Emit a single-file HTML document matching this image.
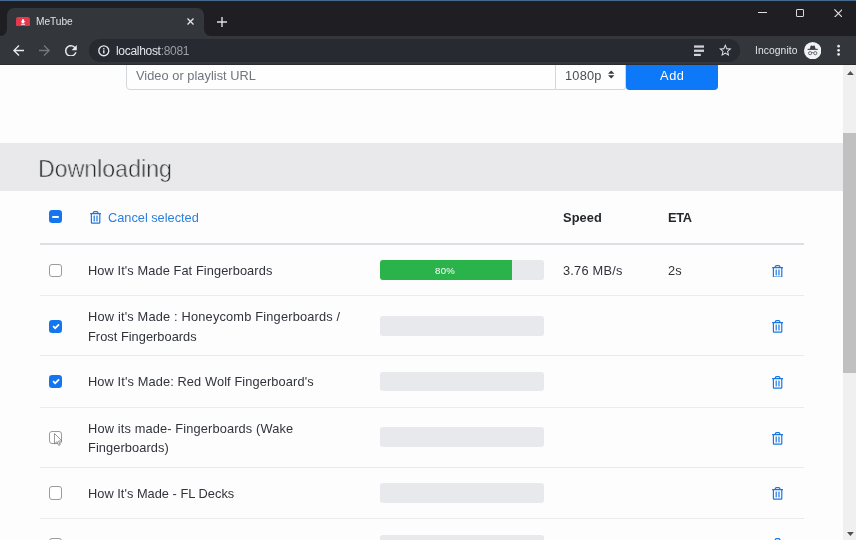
<!DOCTYPE html>
<html lang="en">
<head>
<meta charset="utf-8">
<title>MeTube</title>
<style>
html,body{margin:0;padding:0;}
body{width:856px;height:540px;overflow:hidden;background:#fdfdfe;font-family:"Liberation Sans",Arial,sans-serif;}
#root{position:relative;width:856px;height:540px;overflow:hidden;background:#fdfdfe;}
.a{position:absolute;}
.t{position:absolute;will-change:transform;white-space:nowrap;line-height:16px;font-size:12.8px;color:#30343a;}
/* chrome */
#frame{left:0;top:0;width:856px;height:36px;background:#1f1f23;}
#topline{left:0;top:0;width:856px;height:2px;background:linear-gradient(#47698b 0,#47698b 50%,#10263d 50%,#10263d 100%);}
#tab{left:7px;top:8px;width:197px;height:28px;background:#33363a;border-radius:7px 7px 0 0;}
#toolbar{left:0;top:36px;width:856px;height:29px;background:#33363a;border-bottom:0;box-shadow:inset 0 -1px 0 #2a2c30;}
#omni{left:89px;top:38.7px;width:650.5px;height:23.3px;border-radius:12px;background:#272a30;}
/* page */
#band{left:0;top:142.7px;width:843.4px;height:48.3px;background:#e9e9eb;}
#sbtrack{left:843.4px;top:64.5px;width:12.6px;height:476px;background:#f0f0f1;}
#sbthumb{left:843.4px;top:133px;width:12.6px;height:240px;background:#c0c0c1;}
.line{position:absolute;left:39.5px;width:764.3px;height:1px;background:#e9ebee;}
.cb{position:absolute;left:49px;width:11.4px;height:11.4px;border:1px solid #9a9a9f;border-radius:3px;background:#fff;}
.cbc{position:absolute;left:49.3px;width:12.8px;height:13px;border-radius:3.2px;background:#1476ef;}
.pb{position:absolute;left:379.7px;width:164.5px;height:19.8px;border-radius:3px;background:#e8e9ec;overflow:hidden;}
.tr{position:absolute;width:11.2px;height:12.8px;}
</style>
</head>
<body>
<div id="root">
<!-- page content -->
<div class="a" id="band"></div>
<div class="a" id="sbtrack"></div>
<div class="a" id="sbthumb"></div>

<!-- add form -->
<div class="a" style="left:126px;top:56px;width:429.5px;height:33.6px;box-sizing:border-box;border:1px solid #d3d7dc;border-radius:0 0 0 4px;background:#fefefe;"></div>
<div class="a" style="left:555.5px;top:56px;width:70px;height:33.6px;box-sizing:border-box;border:1px solid #d3d7dc;border-left:none;border-radius:0 0 3.5px 0;background:#fefefe;"></div>
<div class="a" style="left:625.5px;top:56px;width:92px;height:34px;border-radius:0 0 4px 3.5px;background:#0d78f8;"></div>
<span class="t" id="ph" style="left:136.10px;top:68.20px;color:#70767d;letter-spacing:0.035px;">Video or playlist URL</span>
<span class="t" id="q" style="left:565.40px;top:68.20px;color:#4a4f55;letter-spacing:0.200px;">1080p</span>
<svg class="a" style="left:608.3px;top:70.2px;" width="6.4" height="9" viewBox="0 0 4 5"><path fill="#343a40" d="M2 0L0 2h4zm0 5L0 3h4z"/></svg>
<span class="t" id="add" style="left:659.60px;top:68.20px;color:#fff;letter-spacing:0.600px;">Add</span>

<!-- heading -->
<span class="t" id="h2" style="left:38px;top:152.6px;font-size:24.4px;line-height:32px;color:#25292e;transform:scaleX(0.949);transform-origin:0 0;-webkit-text-stroke:0.6px #e9e9eb;">Downloading</span>

<!-- table header -->
<div class="cbc" style="top:210.3px;"><div class="a" style="left:3px;top:5.6px;width:6.8px;height:2px;background:#fff;border-radius:1px;"></div></div>
<svg class="tr" style="left:89.8px;top:211.3px;" viewBox="0 0 448 512"><path fill="#1b78e2" d="M268 416h24a12 12 0 0 0 12-12V188a12 12 0 0 0-12-12h-24a12 12 0 0 0-12 12v216a12 12 0 0 0 12 12zM432 80h-82.41l-34-56.7A48 48 0 0 0 274.41 0H173.59a48 48 0 0 0-41.16 23.3L98.41 80H16A16 16 0 0 0 0 96v16a16 16 0 0 0 16 16h16v336a48 48 0 0 0 48 48h288a48 48 0 0 0 48-48V128h16a16 16 0 0 0 16-16V96a16 16 0 0 0-16-16zM171.84 50.91A6 6 0 0 1 177 48h94a6 6 0 0 1 5.15 2.91L293.61 80H154.39zM368 464H80V128h288zm-212-48h24a12 12 0 0 0 12-12V188a12 12 0 0 0-12-12h-24a12 12 0 0 0-12 12v216a12 12 0 0 0 12 12z"/></svg>
<span class="t" id="cs" style="left:107.80px;top:209.80px;color:#2b80dc;letter-spacing:-0.021px;">Cancel selected</span>
<span class="t" id="sp" style="left:563.10px;top:210.00px;font-weight:bold;color:#24282c;letter-spacing:0.125px;">Speed</span>
<span class="t" id="eta" style="left:668.40px;top:210.20px;font-weight:bold;color:#24282c;letter-spacing:-0.300px;">ETA</span>
<div class="line" style="top:242.5px;height:2px;background:#dcdfe3;"></div>

<!-- row 1 -->
<div class="cb" style="top:263.5px;"></div>
<span class="t" id="r1" style="left:88.40px;top:262.80px;letter-spacing:0.090px;">How It's Made Fat Fingerboards</span>
<div class="pb" style="top:260px;"><div class="a" style="left:0;top:0;width:132px;height:100%;background:#2bb34b;"></div></div>
<span class="t" id="pc" style="left:435.30px;top:264.10px;font-size:9.6px;line-height:14px;color:#fff;letter-spacing:0.300px;">80%</span>
<span class="t" id="spd" style="left:563.00px;top:262.90px;letter-spacing:0.213px;">3.76 MB/s</span>
<span class="t" id="e2" style="left:667.90px;top:262.90px;letter-spacing:0.100px;">2s</span>
<svg class="tr" style="left:772.3px;top:264.6px;" viewBox="0 0 448 512"><path fill="#1b78e2" d="M268 416h24a12 12 0 0 0 12-12V188a12 12 0 0 0-12-12h-24a12 12 0 0 0-12 12v216a12 12 0 0 0 12 12zM432 80h-82.41l-34-56.7A48 48 0 0 0 274.41 0H173.59a48 48 0 0 0-41.16 23.3L98.41 80H16A16 16 0 0 0 0 96v16a16 16 0 0 0 16 16h16v336a48 48 0 0 0 48 48h288a48 48 0 0 0 48-48V128h16a16 16 0 0 0 16-16V96a16 16 0 0 0-16-16zM171.84 50.91A6 6 0 0 1 177 48h94a6 6 0 0 1 5.15 2.91L293.61 80H154.39zM368 464H80V128h288zm-212-48h24a12 12 0 0 0 12-12V188a12 12 0 0 0-12-12h-24a12 12 0 0 0-12 12v216a12 12 0 0 0 12 12z"/></svg>
<div class="line" style="top:295.3px;"></div>

<!-- row 2 -->
<div class="cbc" style="top:319.7px;"><svg class="a" style="left:2.3px;top:3px;" width="8.2" height="7.2" viewBox="0 0 8 8"><path fill="#fff" d="M6.564.75l-3.59 3.612-1.538-1.55L0 4.26 2.974 7.25 8 2.193z"/></svg></div>
<span class="t" id="r2a" style="left:88.00px;top:309.10px;letter-spacing:0.184px;">How it's Made : Honeycomb Fingerboards /</span>
<span class="t" id="r2b" style="left:88.00px;top:329.30px;letter-spacing:0.030px;">Frost Fingerboards</span>
<div class="pb" style="top:316px;"></div>
<svg class="tr" style="left:772.3px;top:320.4px;" viewBox="0 0 448 512"><path fill="#1b78e2" d="M268 416h24a12 12 0 0 0 12-12V188a12 12 0 0 0-12-12h-24a12 12 0 0 0-12 12v216a12 12 0 0 0 12 12zM432 80h-82.41l-34-56.7A48 48 0 0 0 274.41 0H173.59a48 48 0 0 0-41.16 23.3L98.41 80H16A16 16 0 0 0 0 96v16a16 16 0 0 0 16 16h16v336a48 48 0 0 0 48 48h288a48 48 0 0 0 48-48V128h16a16 16 0 0 0 16-16V96a16 16 0 0 0-16-16zM171.84 50.91A6 6 0 0 1 177 48h94a6 6 0 0 1 5.15 2.91L293.61 80H154.39zM368 464H80V128h288zm-212-48h24a12 12 0 0 0 12-12V188a12 12 0 0 0-12-12h-24a12 12 0 0 0-12 12v216a12 12 0 0 0 12 12z"/></svg>
<div class="line" style="top:355.3px;"></div>

<!-- row 3 -->
<div class="cbc" style="top:375.3px;"><svg class="a" style="left:2.3px;top:3px;" width="8.2" height="7.2" viewBox="0 0 8 8"><path fill="#fff" d="M6.564.75l-3.59 3.612-1.538-1.55L0 4.26 2.974 7.25 8 2.193z"/></svg></div>
<span class="t" id="r3" style="left:88.00px;top:374.30px;letter-spacing:0.112px;">How It's Made: Red Wolf Fingerboard's</span>
<div class="pb" style="top:371.7px;"></div>
<svg class="tr" style="left:772.3px;top:376px;" viewBox="0 0 448 512"><path fill="#1b78e2" d="M268 416h24a12 12 0 0 0 12-12V188a12 12 0 0 0-12-12h-24a12 12 0 0 0-12 12v216a12 12 0 0 0 12 12zM432 80h-82.41l-34-56.7A48 48 0 0 0 274.41 0H173.59a48 48 0 0 0-41.16 23.3L98.41 80H16A16 16 0 0 0 0 96v16a16 16 0 0 0 16 16h16v336a48 48 0 0 0 48 48h288a48 48 0 0 0 48-48V128h16a16 16 0 0 0 16-16V96a16 16 0 0 0-16-16zM171.84 50.91A6 6 0 0 1 177 48h94a6 6 0 0 1 5.15 2.91L293.61 80H154.39zM368 464H80V128h288zm-212-48h24a12 12 0 0 0 12-12V188a12 12 0 0 0-12-12h-24a12 12 0 0 0-12 12v216a12 12 0 0 0 12 12z"/></svg>
<div class="line" style="top:406.8px;"></div>

<!-- row 4 -->
<div class="cb" style="top:430.7px;"></div>
<svg class="a" style="left:53.700px;top:433px;" width="9" height="13" viewBox="0 0 9 13"><path fill="#fff" stroke="#6e6e72" stroke-width="0.700" stroke-linejoin="round" d="M0.500 0.500v10.400l2.500-2.300 1.700 3.800 1.500-.700-1.700-3.700h3.500z"/></svg>
<span class="t" id="r4a" style="left:88.00px;top:420.80px;letter-spacing:0.141px;">How its made- Fingerboards (Wake</span>
<span class="t" id="r4b" style="left:88.00px;top:440.00px;letter-spacing:0.092px;">Fingerboards)</span>
<div class="pb" style="top:427.4px;"></div>
<svg class="tr" style="left:772.3px;top:431.8px;" viewBox="0 0 448 512"><path fill="#1b78e2" d="M268 416h24a12 12 0 0 0 12-12V188a12 12 0 0 0-12-12h-24a12 12 0 0 0-12 12v216a12 12 0 0 0 12 12zM432 80h-82.41l-34-56.7A48 48 0 0 0 274.41 0H173.59a48 48 0 0 0-41.16 23.3L98.41 80H16A16 16 0 0 0 0 96v16a16 16 0 0 0 16 16h16v336a48 48 0 0 0 48 48h288a48 48 0 0 0 48-48V128h16a16 16 0 0 0 16-16V96a16 16 0 0 0-16-16zM171.84 50.91A6 6 0 0 1 177 48h94a6 6 0 0 1 5.15 2.91L293.61 80H154.39zM368 464H80V128h288zm-212-48h24a12 12 0 0 0 12-12V188a12 12 0 0 0-12-12h-24a12 12 0 0 0-12 12v216a12 12 0 0 0 12 12z"/></svg>
<div class="line" style="top:466.6px;"></div>

<!-- row 5 -->
<div class="cb" style="top:486.3px;"></div>
<span class="t" id="r5" style="left:88.30px;top:486.20px;letter-spacing:0.026px;">How It's Made - FL Decks</span>
<div class="pb" style="top:483px;"></div>
<svg class="tr" style="left:772.3px;top:487.3px;" viewBox="0 0 448 512"><path fill="#1b78e2" d="M268 416h24a12 12 0 0 0 12-12V188a12 12 0 0 0-12-12h-24a12 12 0 0 0-12 12v216a12 12 0 0 0 12 12zM432 80h-82.41l-34-56.7A48 48 0 0 0 274.41 0H173.59a48 48 0 0 0-41.16 23.3L98.41 80H16A16 16 0 0 0 0 96v16a16 16 0 0 0 16 16h16v336a48 48 0 0 0 48 48h288a48 48 0 0 0 48-48V128h16a16 16 0 0 0 16-16V96a16 16 0 0 0-16-16zM171.84 50.91A6 6 0 0 1 177 48h94a6 6 0 0 1 5.15 2.91L293.61 80H154.39zM368 464H80V128h288zm-212-48h24a12 12 0 0 0 12-12V188a12 12 0 0 0-12-12h-24a12 12 0 0 0-12 12v216a12 12 0 0 0 12 12z"/></svg>
<div class="line" style="top:518.2px;"></div>

<!-- row 6 (cut off) -->
<div class="cb" style="top:538px;"></div>
<div class="pb" style="top:535px;"></div>
<svg class="tr" style="left:772.3px;top:537.5px;" viewBox="0 0 448 512"><path fill="#1b78e2" d="M268 416h24a12 12 0 0 0 12-12V188a12 12 0 0 0-12-12h-24a12 12 0 0 0-12 12v216a12 12 0 0 0 12 12zM432 80h-82.41l-34-56.7A48 48 0 0 0 274.41 0H173.59a48 48 0 0 0-41.16 23.3L98.41 80H16A16 16 0 0 0 0 96v16a16 16 0 0 0 16 16h16v336a48 48 0 0 0 48 48h288a48 48 0 0 0 48-48V128h16a16 16 0 0 0 16-16V96a16 16 0 0 0-16-16zM171.84 50.91A6 6 0 0 1 177 48h94a6 6 0 0 1 5.15 2.91L293.61 80H154.39zM368 464H80V128h288zm-212-48h24a12 12 0 0 0 12-12V188a12 12 0 0 0-12-12h-24a12 12 0 0 0-12 12v216a12 12 0 0 0 12 12z"/></svg>

<!-- browser chrome -->
<div class="a" id="frame"></div>
<div class="a" id="topline"></div>
<div class="a" id="tab"></div>
<div class="a" id="toolbar"></div>
<div class="a" id="omni"></div>

<!-- tab curves -->
<svg class="a" style="left:0;top:28px;" width="7" height="8" viewBox="0 0 7 8"><path fill="#33363a" d="M0 8h7V0C7 4.5 4.5 8 0 8z"/></svg>
<svg class="a" style="left:204px;top:28px;" width="7" height="8" viewBox="0 0 7 8"><path fill="#33363a" d="M7 8H0V0c0 4.500 2.500 8 7 8z"/></svg>
<!-- favicon -->
<svg class="a" style="left:16.100px;top:16.500px;" width="14" height="9.700" viewBox="0 0 28 19.400"><rect x="0" y="0" width="28" height="19.400" rx="4.500" fill="#e6384c"/><path fill="#fff" d="M11.800 4.500h4.400v4h2.600L14 13.300 9.200 8.500h2.600z"/><rect x="10" y="13.600" width="8" height="1.800" fill="#fff"/></svg>
<span class="t" id="tt" style="left:35.90px;top:15.3px;font-size:10.2px;line-height:14px;color:#dfe1e5;letter-spacing:-0.060px;">MeTube</span>
<svg class="a" style="left:186.800px;top:17.800px;" width="7" height="7" viewBox="0 0 7 7"><path stroke="#e4e6e9" stroke-width="1.300" fill="none" d="M0.500 0.500l6 6M6.500 0.500l-6 6"/></svg>
<svg class="a" style="left:217px;top:16.500px;" width="10" height="10" viewBox="0 0 10 10"><path stroke="#dcdee2" stroke-width="1.400" fill="none" d="M5 0v10M0 5h10"/></svg>
<!-- window controls -->
<div class="a" style="left:758.400px;top:12.300px;width:8.700px;height:1.200px;background:#dcdee1;"></div>
<div class="a" style="left:795.700px;top:8.500px;width:6.400px;height:6.800px;border:1.150px solid #d6d8db;border-radius:1px;"></div>
<svg class="a" style="left:833.500px;top:8.700px;" width="8.800" height="8.800" viewBox="0 0 8.800 8.800"><path stroke="#dfe1e4" stroke-width="1.150" fill="none" d="M0.400 0.400l8 8M8.400 0.400l-8 8"/></svg>
<!-- nav buttons -->
<svg class="a" style="left:12.500px;top:45px;" width="11" height="11" viewBox="0 0 16 16"><path fill="#e8eaed" d="M16 7H3.830l5.590-5.590L8 0 0 8l8 8 1.410-1.410L3.830 9H16z"/></svg>
<svg class="a" style="left:39px;top:45px;" width="11" height="11" viewBox="0 0 16 16"><path fill="#74787d" d="M0 7h12.170L6.580 1.410 8 0l8 8-8 8-1.410-1.410L12.170 9H0z"/></svg>
<svg class="a" style="left:65.200px;top:44.600px;" width="11.800" height="11.800" viewBox="0 0 16 16"><path fill="#e8eaed" d="M13.650 2.350A7.958 7.958 0 0 0 8 0C3.580 0 .01 3.580.01 8S3.580 16 8 16c3.730 0 6.840-2.550 7.730-6h-2.080A5.990 5.990 0 0 1 8 14c-3.310 0-6-2.690-6-6s2.690-6 6-6c1.660 0 3.140.69 4.220 1.780L9 7h7V0z"/></svg>
<!-- omnibox content -->
<svg class="a" style="left:98px;top:45px;" width="11.600" height="11.600" viewBox="0 0 20 20"><circle cx="10" cy="10" r="8.600" fill="none" stroke="#e6e8eb" stroke-width="2.300"/><rect x="8.800" y="9" width="2.400" height="5.500" fill="#e6e8eb"/><rect x="8.800" y="5.400" width="2.400" height="2.300" fill="#e6e8eb"/></svg>
<span class="t" id="url" style="left:115.70px;top:43.8px;font-size:12px;line-height:15px;color:#e4e6ea;letter-spacing:-0.303px;">localhost<span style="color:#9a9fa6;">:8081</span></span>
<svg class="a" style="left:693px;top:44px;" width="12" height="13" viewBox="0 0 12 13"><rect x="1" y="1.400" width="10" height="2.300" fill="#d0d2d6"/><rect x="1" y="5.600" width="10" height="2.300" fill="#d0d2d6"/><rect x="1" y="9.800" width="6.800" height="2.200" fill="#d0d2d6"/></svg>
<svg class="a" style="left:719px;top:44.300px;" width="12.600" height="12" viewBox="0 0 20 19"><path fill="#dfe1e5" d="M20 7.240l-7.190-.62L10 0 7.190 6.630 0 7.240l5.460 4.730L3.820 19 10 15.270 16.180 19l-1.630-7.030L20 7.240zM10 13.400l-3.760 2.270 1-4.280-3.320-2.880 4.380-.38L10 4.100l1.710 4.040 4.380.38-3.320 2.880 1 4.280L10 13.400z"/></svg>
<span class="t" id="inc" style="left:754.90px;top:44.30px;font-size:10.300px;line-height:14px;color:#e2e4e8;letter-spacing:0.087px;">Incognito</span>
<svg class="a" style="left:804px;top:41.500px;" width="17.400" height="17.400" viewBox="0 0 24 24"><circle cx="12" cy="12" r="12" fill="#f1f2f4"/><path fill="#3c3f44" d="M8 9.600l1.100-4.200c.1-.5.600-.8 1.100-.6l1.800.6 1.800-.6c.5-.2 1 .1 1.100.6L16 9.600z"/><rect x="5" y="9.400" width="14" height="1.500" fill="#3c3f44"/><circle cx="8.400" cy="15.400" r="2.200" fill="none" stroke="#55585d" stroke-width="1.200"/><circle cx="15.600" cy="15.400" r="2.200" fill="none" stroke="#55585d" stroke-width="1.200"/><path stroke="#55585d" stroke-width="1.100" fill="none" d="M10.600 14.900c.9-.5 1.900-.5 2.800 0"/></svg>
<svg class="a" style="left:836px;top:43px;" width="5" height="14" viewBox="0 0 5 14"><circle cx="2.600" cy="3.200" r="1.350" fill="#e6e8eb"/><circle cx="2.600" cy="7.300" r="1.350" fill="#e6e8eb"/><circle cx="2.600" cy="11.400" r="1.350" fill="#e6e8eb"/></svg>
<!-- scrollbar arrows -->
<svg class="a" style="left:846.900px;top:70.900px;" width="6.800" height="4" viewBox="0 0 7 4"><path fill="#505050" d="M3.500 0L7 4H0z"/></svg>
<svg class="a" style="left:846.900px;top:531.600px;" width="6.800" height="4" viewBox="0 0 7 4"><path fill="#505050" d="M3.500 4L7 0H0z"/></svg>
</div>
</body>
</html>
